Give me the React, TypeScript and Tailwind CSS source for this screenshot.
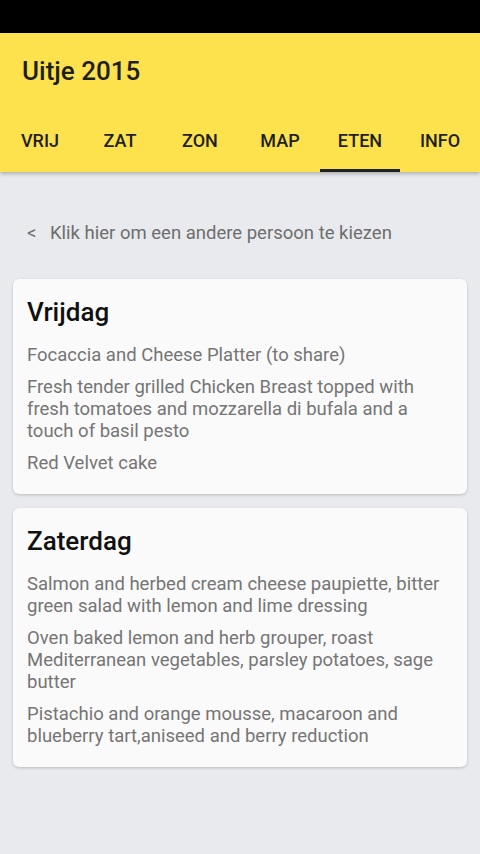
import React from "react";

const tabs = ["VRIJ", "ZAT", "ZON", "MAP", "ETEN", "INFO"];

const days = [
  {
    title: "Vrijdag",
    items: [
      "Focaccia and Cheese Platter (to share)",
      "Fresh tender grilled Chicken Breast topped with fresh tomatoes and mozzarella di bufala and a touch of basil pesto",
      "Red Velvet cake",
    ],
  },
  {
    title: "Zaterdag",
    items: [
      "Salmon and herbed cream cheese paupiette, bitter green salad with lemon and lime dressing",
      "Oven baked lemon and herb grouper, roast Mediterranean vegetables, parsley potatoes, sage butter",
      "Pistachio and orange mousse, macaroon and blueberry tart,aniseed and berry reduction",
    ],
  },
];

export default function App() {
  return (
    <div
      className="w-[480px] h-[854px] bg-[#e8eaed] flex flex-col overflow-hidden"
      style={{ fontFamily: "Roboto, 'Noto Sans', sans-serif" }}
    >
      <div className="h-[33px] bg-black shrink-0" />
      <div className="bg-[#fde24e] shrink-0 shadow-[0_2px_4px_rgba(0,0,0,0.25)] relative z-10">
        <div className="h-[76px] flex items-center px-[22px]">
          <span className="text-[26px] font-medium text-[#1f1f1f]">Uitje 2015</span>
        </div>
        <div className="h-[63px] flex">
          {tabs.map((t) => (
            <div key={t} className="flex-1 relative flex items-center justify-center">
              <span className="text-[18px] font-medium text-[#1f1f1f]">{t}</span>
              {t === "ETEN" && (
                <div className="absolute left-0 right-0 bottom-0 h-[3px] bg-[#1f1f1f]" />
              )}
            </div>
          ))}
        </div>
      </div>
      <div className="pt-[50px] pb-[35px] px-[27px] flex items-center text-[18.5px] leading-[22px] text-[#6e6e6e]">
        <span className="w-[23px]">&lt;</span>
        <span>Klik hier om een andere persoon te kiezen</span>
      </div>
      <div className="px-[13px] flex flex-col gap-[14px]">
        {days.map((d) => (
          <div
            key={d.title}
            className="bg-[#fafafa] rounded-[6px] shadow-[0_1px_3px_rgba(0,0,0,0.2)] px-[14px] pt-[16px] pb-[20px]"
          >
            <div className="text-[26px] leading-[34px] font-medium text-[#111]">{d.title}</div>
            <div className="mt-[15px] flex flex-col gap-[10px]">
              {d.items.map((it) => (
                <div key={it} className="text-[18.5px] leading-[22px] text-[#757575]">
                  {it}
                </div>
              ))}
            </div>
          </div>
        ))}
      </div>
    </div>
  );
}
